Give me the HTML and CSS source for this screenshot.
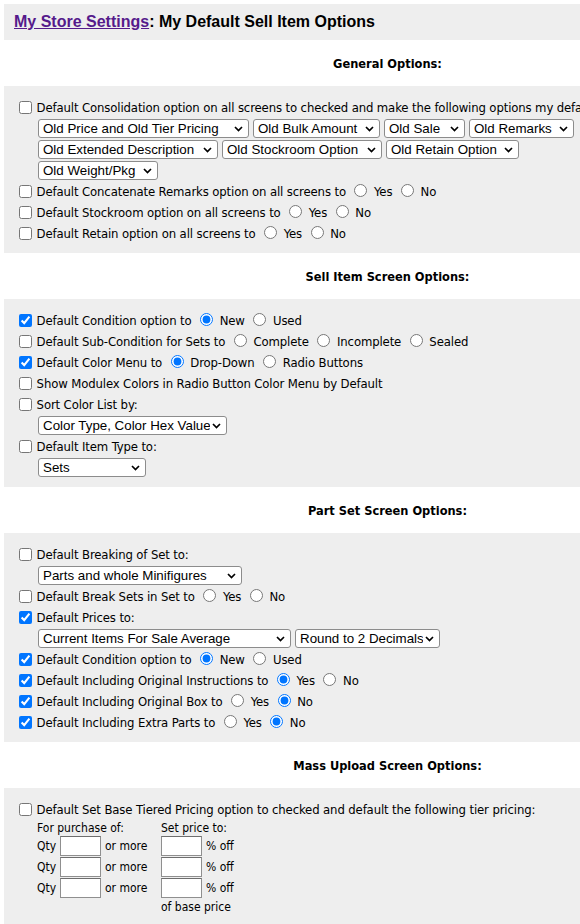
FILE: index.html
```html
<!DOCTYPE html>
<html lang="en">
<head>
<meta charset="utf-8">
<title>My Default Sell Item Options</title>
<link rel="stylesheet" href="styles.css">
</head>
<body>
<div class="page">
  <div class="sheet">
    <div class="title-bar"><a href="#" class="crumb">My Store Settings</a>: My Default Sell Item Options</div>

    <h2 class="section-title">General Options:</h2>
    <div class="panel">
      <div class="row"><input type="checkbox" class="cb"> Default Consolidation option on all screens to checked and make the following options my default values:</div>
      <div class="row sub">
        <select class="sel w-oldprice"><option>Old Price and Old Tier Pricing</option></select>
        <select class="sel w-oldbulk"><option>Old Bulk Amount</option></select>
        <select class="sel w-oldsale"><option>Old Sale</option></select>
        <select class="sel w-oldremarks"><option>Old Remarks</option></select>
      </div>
      <div class="row sub">
        <select class="sel w-oldext"><option>Old Extended Description</option></select>
        <select class="sel w-oldstock"><option>Old Stockroom Option</option></select>
        <select class="sel w-oldretain"><option>Old Retain Option</option></select>
      </div>
      <div class="row sub">
        <select class="sel w-oldweight"><option>Old Weight/Pkg</option></select>
      </div>
      <div class="row"><input type="checkbox" class="cb"> Default Concatenate Remarks option on all screens to <input type="radio" class="rb" name="concat"> Yes <input type="radio" class="rb" name="concat"> No</div>
      <div class="row"><input type="checkbox" class="cb"> Default Stockroom option on all screens to <input type="radio" class="rb" name="stock"> Yes <input type="radio" class="rb" name="stock"> No</div>
      <div class="row"><input type="checkbox" class="cb"> Default Retain option on all screens to <input type="radio" class="rb" name="retain"> Yes <input type="radio" class="rb" name="retain"> No</div>
    </div>

    <h2 class="section-title">Sell Item Screen Options:</h2>
    <div class="panel">
      <div class="row"><input type="checkbox" class="cb" checked> Default Condition option to <input type="radio" class="rb" name="cond" checked> New <input type="radio" class="rb" name="cond"> Used</div>
      <div class="row"><input type="checkbox" class="cb"> Default Sub-Condition for Sets to <input type="radio" class="rb" name="subcond"> Complete <input type="radio" class="rb" name="subcond"> Incomplete <input type="radio" class="rb" name="subcond"> Sealed</div>
      <div class="row"><input type="checkbox" class="cb" checked> Default Color Menu to <input type="radio" class="rb" name="colmenu" checked> Drop-Down <input type="radio" class="rb" name="colmenu"> Radio Buttons</div>
      <div class="row"><input type="checkbox" class="cb"> Show Modulex Colors in Radio Button Color Menu by Default</div>
      <div class="row"><input type="checkbox" class="cb"> Sort Color List by:</div>
      <div class="row sub"><select class="sel w-colortype"><option>Color Type, Color Hex Value</option></select></div>
      <div class="row"><input type="checkbox" class="cb"> Default Item Type to:</div>
      <div class="row sub"><select class="sel w-sets"><option>Sets</option></select></div>
    </div>

    <h2 class="section-title">Part Set Screen Options:</h2>
    <div class="panel">
      <div class="row"><input type="checkbox" class="cb"> Default Breaking of Set to:</div>
      <div class="row sub"><select class="sel w-parts"><option>Parts and whole Minifigures</option></select></div>
      <div class="row"><input type="checkbox" class="cb"> Default Break Sets in Set to <input type="radio" class="rb" name="breaksets"> Yes <input type="radio" class="rb" name="breaksets"> No</div>
      <div class="row"><input type="checkbox" class="cb" checked> Default Prices to:</div>
      <div class="row sub">
        <select class="sel w-current"><option>Current Items For Sale Average</option></select>
        <select class="sel w-round"><option>Round to 2 Decimals</option></select>
      </div>
      <div class="row"><input type="checkbox" class="cb" checked> Default Condition option to <input type="radio" class="rb" name="pcond" checked> New <input type="radio" class="rb" name="pcond"> Used</div>
      <div class="row"><input type="checkbox" class="cb" checked> Default Including Original Instructions to <input type="radio" class="rb" name="instr" checked> Yes <input type="radio" class="rb" name="instr"> No</div>
      <div class="row"><input type="checkbox" class="cb" checked> Default Including Original Box to <input type="radio" class="rb" name="box"> Yes <input type="radio" class="rb" name="box" checked> No</div>
      <div class="row"><input type="checkbox" class="cb" checked> Default Including Extra Parts to <input type="radio" class="rb" name="extra"> Yes <input type="radio" class="rb" name="extra" checked> No</div>
    </div>

    <h2 class="section-title">Mass Upload Screen Options:</h2>
    <div class="panel">
      <div class="row"><input type="checkbox" class="cb"> Default Set Base Tiered Pricing option to checked and default the following tier pricing:</div>
      <div class="tier">
        <div class="tier-head-a">For purchase of:</div>
        <div class="tier-head-b">Set price to:</div>

        <div class="tier-label">Qty</div>
        <input type="text" class="tier-input">
        <div class="tier-after">or more</div>
        <input type="text" class="tier-input">
        <div class="tier-after">% off</div>

        <div class="tier-label">Qty</div>
        <input type="text" class="tier-input">
        <div class="tier-after">or more</div>
        <input type="text" class="tier-input">
        <div class="tier-after">% off</div>

        <div class="tier-label">Qty</div>
        <input type="text" class="tier-input">
        <div class="tier-after">or more</div>
        <input type="text" class="tier-input">
        <div class="tier-after">% off</div>

        <div class="tier-foot">of base price</div>
      </div>
    </div>
  </div>
</div>
</body>
</html>
```
FILE: styles.css
```css
html, body {
  margin: 0;
  padding: 0;
  background: #ffffff;
}

body {
  font-family: "DejaVu Sans Condensed", "DejaVu Sans", sans-serif;
  font-stretch: condensed;
  font-size: 13px;
  letter-spacing: -0.13px;
  color: #000000;
}

.page {
  overflow: hidden;
  height: 920px;
  padding: 4px 0 0 4px;
}

.sheet {
  width: 767px;
}

.title-bar {
  background: #eeeeee;
  height: 36px;
  box-sizing: border-box;
  padding: 9px 10px;
  font-family: "Liberation Sans", Arial, sans-serif;
  font-stretch: normal;
  font-weight: bold;
  font-size: 16px;
  line-height: 18px;
  letter-spacing: 0;
  white-space: nowrap;
}

.crumb {
  color: #551a8b;
  text-decoration: underline;
}

.section-title {
  margin: 0;
  height: 46px;
  display: flex;
  align-items: center;
  justify-content: center;
  font-size: 12.7px;
  font-weight: bold;
  letter-spacing: 0;
}

.panel {
  background: #eeeeee;
  padding: 11px 0 9px 11px;
}

.row {
  height: 21px;
  line-height: 21px;
  white-space: nowrap;
}

.row.sub {
  display: flex;
  align-items: flex-start;
  gap: 4px;
  padding-left: 23px;
}

.cb {
  width: 13px;
  height: 13px;
  margin: 0 1px 0 4px;
  vertical-align: -2px;
}

.rb {
  width: 13px;
  height: 13px;
  margin: 0 3px 0 5px;
  vertical-align: -1px;
}

.sel {
  -webkit-appearance: none;
  appearance: none;
  box-sizing: border-box;
  flex: none;
  height: 19px;
  margin: 1px 0 0;
  padding: 0 16px 0 4px;
  border: 1px solid #8c8c8c;
  border-radius: 3px;
  background: #ffffff url("data:image/svg+xml,%3Csvg xmlns='http://www.w3.org/2000/svg' width='9' height='6' viewBox='0 0 9 6'%3E%3Cpath d='M1 1l3.5 3.5L8 1' fill='none' stroke='%23000' stroke-width='1.7'/%3E%3C/svg%3E") no-repeat right 5px center;
  font-family: "Liberation Sans", Arial, sans-serif;
  font-stretch: normal;
  font-size: 13.33px;
  line-height: 17px;
  letter-spacing: 0;
  color: #000000;
}

.w-oldprice { width: 211px; }
.w-oldbulk { width: 127px; }
.w-oldsale { width: 81px; }
.w-oldremarks { width: 105px; }
.w-oldext { width: 180px; }
.w-oldstock { width: 160px; }
.w-oldretain { width: 133px; }
.w-oldweight { width: 120px; }
.w-colortype { width: 189px; }
.w-sets { width: 108px; }
.w-parts { width: 204px; }
.w-current { width: 253px; }
.w-round { width: 145px; }

.tier {
  display: grid;
  grid-template-columns: 23px 41px 60px 41px auto;
  grid-template-rows: 15px 20px 20px 20px 16px;
  row-gap: 1px;
  padding-left: 22px;
  font-size: 12px;
  letter-spacing: 0;
  align-items: center;
  white-space: nowrap;
}

.tier-head-a {
  grid-column: 1 / 4;
}

.tier-head-b {
  grid-column: 4 / 6;
}

.tier-after {
  padding-left: 4px;
}

.tier-foot {
  grid-column: 4 / 6;
}

.tier-input {
  box-sizing: border-box;
  width: 41px;
  height: 20px;
  margin: 0;
  padding: 0 2px;
  border: 1px solid #8f8f8f;
  border-top-color: #6e6e6e;
  border-radius: 0;
  background: #ffffff;
  font-size: 12px;
}
```
